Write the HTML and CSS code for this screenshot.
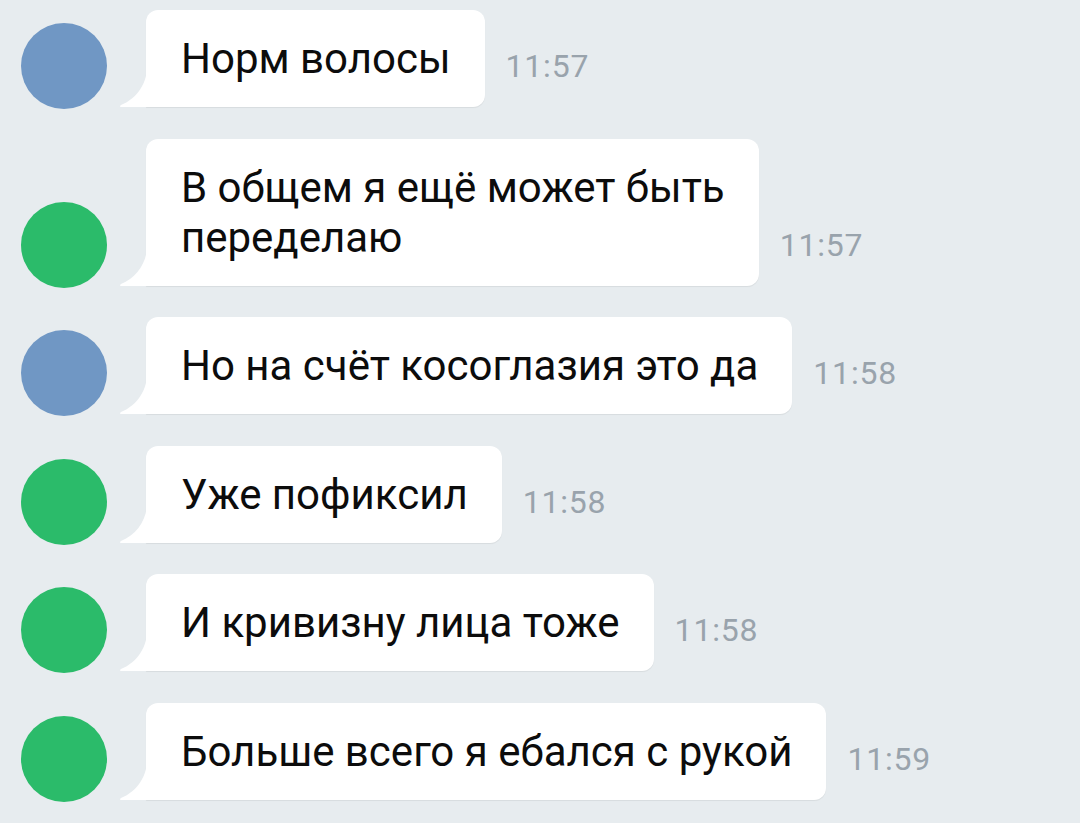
FILE: index.html
```html
<!DOCTYPE html>
<html lang="ru">
<head>
<meta charset="utf-8">
<link rel="stylesheet" href="styles.css">
</head>
<body>
<div class="chat">
  <div class="row">
    <div class="avatar blue"></div>
    <div class="bubble"><svg class="tail" viewBox="0 0 28 38" width="28" height="38"><path d="M28 0 C27 16 17 30 2 36 Q0 37.5 2 38 L28 38 Z"/></svg>Норм волосы</div>
    <div class="time">11:57</div>
  </div>
  <div class="row">
    <div class="avatar green"></div>
    <div class="bubble"><svg class="tail" viewBox="0 0 28 38" width="28" height="38"><path d="M28 0 C27 16 17 30 2 36 Q0 37.5 2 38 L28 38 Z"/></svg>В общем я ещё может быть<br>переделаю</div>
    <div class="time">11:57</div>
  </div>
  <div class="row">
    <div class="avatar blue"></div>
    <div class="bubble"><svg class="tail" viewBox="0 0 28 38" width="28" height="38"><path d="M28 0 C27 16 17 30 2 36 Q0 37.5 2 38 L28 38 Z"/></svg>Но на счёт косоглазия это да</div>
    <div class="time">11:58</div>
  </div>
  <div class="row">
    <div class="avatar green"></div>
    <div class="bubble"><svg class="tail" viewBox="0 0 28 38" width="28" height="38"><path d="M28 0 C27 16 17 30 2 36 Q0 37.5 2 38 L28 38 Z"/></svg>Уже пофиксил</div>
    <div class="time">11:58</div>
  </div>
  <div class="row">
    <div class="avatar green"></div>
    <div class="bubble"><svg class="tail" viewBox="0 0 28 38" width="28" height="38"><path d="M28 0 C27 16 17 30 2 36 Q0 37.5 2 38 L28 38 Z"/></svg>И кривизну лица тоже</div>
    <div class="time">11:58</div>
  </div>
  <div class="row">
    <div class="avatar green"></div>
    <div class="bubble"><svg class="tail" viewBox="0 0 28 38" width="28" height="38"><path d="M28 0 C27 16 17 30 2 36 Q0 37.5 2 38 L28 38 Z"/></svg>Больше всего я ебался с рукой</div>
    <div class="time">11:59</div>
  </div>
</div>
</body>
</html>
```

FILE: styles.css
```css
html, body {
  margin: 0;
  padding: 0;
  background: #e7ecef;
  width: 1080px;
  height: 823px;
  overflow: hidden;
}

.chat {
  display: flex;
  flex-direction: column;
  gap: 31.5px;
  padding: 10px 0 0 21px;
  font-family: Roboto, "Noto Sans", sans-serif;
}

.row {
  display: flex;
  align-items: flex-end;
}

.avatar {
  width: 86px;
  height: 86px;
  border-radius: 50%;
  flex: none;
  margin-right: 39px;
  margin-bottom: -2px;
}

.avatar.blue { background: #7097c4; }
.avatar.green { background: #2bbb6a; }

.bubble {
  position: relative;
  background: #ffffff;
  border-radius: 12px 12px 12px 0;
  padding: 24px 34px 23px 35px;
  font-size: 42px;
  line-height: 50px;
  color: #0c0c0c;
  box-shadow: 0 1px 1px rgba(0, 0, 0, 0.07);
  white-space: nowrap;
}

.tail {
  position: absolute;
  left: -27px;
  bottom: 0;
  fill: #ffffff;
  display: block;
}

.time {
  margin-left: 21px;
  margin-bottom: 25px;
  font-size: 32px;
  line-height: 32px;
  letter-spacing: 0.8px;
  color: #99a3ac;
}
```
